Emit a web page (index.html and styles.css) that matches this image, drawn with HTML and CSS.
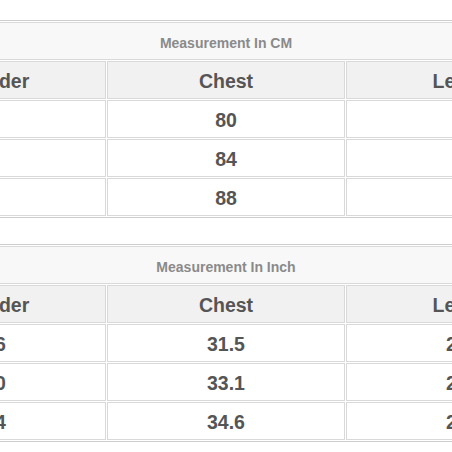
FILE: index.html
```html
<!DOCTYPE html>
<html>
<head>
<meta charset="utf-8">
<link rel="stylesheet" href="styles.css">
</head>
<body>
<div class="page">
  <table class="size-table">
    <tr><td class="title" colspan="3">Measurement In CM</td></tr>
    <tr class="head"><th>Shoulder</th><th>Chest</th><th>Length</th></tr>
    <tr><td>36</td><td>80</td><td>56</td></tr>
    <tr><td>38</td><td>84</td><td>58</td></tr>
    <tr><td>40</td><td>88</td><td>60</td></tr>
  </table>
  <table class="size-table">
    <tr><td class="title" colspan="3">Measurement In Inch</td></tr>
    <tr class="head"><th>Shoulder</th><th>Chest</th><th>Length</th></tr>
    <tr><td>14.6</td><td>31.5</td><td>22.0</td></tr>
    <tr><td>15.0</td><td>33.1</td><td>22.8</td></tr>
    <tr><td>15.4</td><td>34.6</td><td>23.6</td></tr>
  </table>
</div>
</body>
</html>
```
FILE: styles.css
```css
html, body {
  margin: 0;
  padding: 0;
  background: #fff;
  overflow: hidden;
}
.page {
  width: 452px;
  height: 452px;
  overflow: hidden;
  padding-top: 20px;
  box-sizing: border-box;
  display: flex;
  flex-direction: column;
  gap: 26px;
}
.size-table {
  margin-left: -134px;
  width: 720px;
  flex: none;
  border-collapse: separate;
  border-spacing: 1px;
  border: 1px solid #cdcdcd;
  table-layout: fixed;
  font-family: "Liberation Sans", Arial, sans-serif;
  font-weight: bold;
  color: #555;
}
.size-table td, .size-table th {
  border: 1px solid #d9d9d9;
  height: 38px;
  padding: 3px 0 0;
  text-align: center;
  vertical-align: middle;
  font-size: 19.5px;
  font-weight: bold;
  box-sizing: border-box;
}
.size-table td {
  background: #fff;
}
.size-table .head th {
  background: #f1f1f1;
  color: #555;
}
.size-table td.title {
  background: #f8f8f8;
  color: #8a8a8a;
  font-size: 14px;
}
```
